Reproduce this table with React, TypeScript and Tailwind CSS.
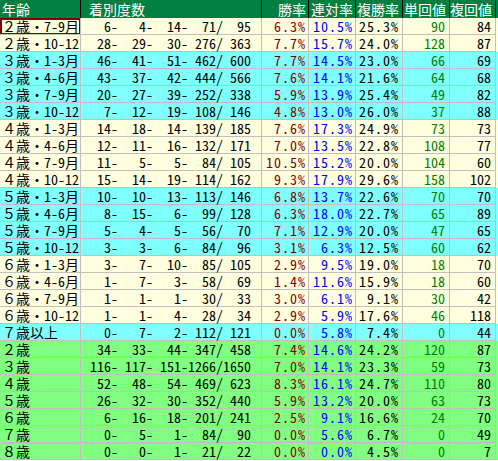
type Row = {
  label: string;
  rec: [number, number, number, number, number];
  win: string;
  ren: string;
  fuku: string;
  tan: number;
  fukuK: number;
  bg: string;
};

const CREAM = 'bg-[#ffffe0]';
const CYAN = 'bg-[#80ffff]';
const GREEN = 'bg-[#80ff80]';

const rows: Row[] = [
  { label: '２歳・7-9月', rec: [6, 4, 14, 71, 95], win: '6.3%', ren: '10.5%', fuku: '25.3%', tan: 90, fukuK: 84, bg: CREAM },
  { label: '２歳・10-12', rec: [28, 29, 30, 276, 363], win: '7.7%', ren: '15.7%', fuku: '24.0%', tan: 128, fukuK: 87, bg: CREAM },
  { label: '３歳・1-3月', rec: [46, 41, 51, 462, 600], win: '7.7%', ren: '14.5%', fuku: '23.0%', tan: 66, fukuK: 69, bg: CYAN },
  { label: '３歳・4-6月', rec: [43, 37, 42, 444, 566], win: '7.6%', ren: '14.1%', fuku: '21.6%', tan: 64, fukuK: 68, bg: CYAN },
  { label: '３歳・7-9月', rec: [20, 27, 39, 252, 338], win: '5.9%', ren: '13.9%', fuku: '25.4%', tan: 49, fukuK: 82, bg: CYAN },
  { label: '３歳・10-12', rec: [7, 12, 19, 108, 146], win: '4.8%', ren: '13.0%', fuku: '26.0%', tan: 37, fukuK: 88, bg: CYAN },
  { label: '４歳・1-3月', rec: [14, 18, 14, 139, 185], win: '7.6%', ren: '17.3%', fuku: '24.9%', tan: 73, fukuK: 73, bg: CREAM },
  { label: '４歳・4-6月', rec: [12, 11, 16, 132, 171], win: '7.0%', ren: '13.5%', fuku: '22.8%', tan: 108, fukuK: 77, bg: CREAM },
  { label: '４歳・7-9月', rec: [11, 5, 5, 84, 105], win: '10.5%', ren: '15.2%', fuku: '20.0%', tan: 104, fukuK: 60, bg: CREAM },
  { label: '４歳・10-12', rec: [15, 14, 19, 114, 162], win: '9.3%', ren: '17.9%', fuku: '29.6%', tan: 158, fukuK: 102, bg: CREAM },
  { label: '５歳・1-3月', rec: [10, 10, 13, 113, 146], win: '6.8%', ren: '13.7%', fuku: '22.6%', tan: 70, fukuK: 70, bg: CYAN },
  { label: '５歳・4-6月', rec: [8, 15, 6, 99, 128], win: '6.3%', ren: '18.0%', fuku: '22.7%', tan: 65, fukuK: 89, bg: CYAN },
  { label: '５歳・7-9月', rec: [5, 4, 5, 56, 70], win: '7.1%', ren: '12.9%', fuku: '20.0%', tan: 47, fukuK: 65, bg: CYAN },
  { label: '５歳・10-12', rec: [3, 3, 6, 84, 96], win: '3.1%', ren: '6.3%', fuku: '12.5%', tan: 60, fukuK: 62, bg: CYAN },
  { label: '６歳・1-3月', rec: [3, 7, 10, 85, 105], win: '2.9%', ren: '9.5%', fuku: '19.0%', tan: 18, fukuK: 70, bg: CREAM },
  { label: '６歳・4-6月', rec: [1, 7, 3, 58, 69], win: '1.4%', ren: '11.6%', fuku: '15.9%', tan: 18, fukuK: 60, bg: CREAM },
  { label: '６歳・7-9月', rec: [1, 1, 1, 30, 33], win: '3.0%', ren: '6.1%', fuku: '9.1%', tan: 30, fukuK: 42, bg: CREAM },
  { label: '６歳・10-12', rec: [1, 1, 4, 28, 34], win: '2.9%', ren: '5.9%', fuku: '17.6%', tan: 46, fukuK: 118, bg: CREAM },
  { label: '７歳以上', rec: [0, 7, 2, 112, 121], win: '0.0%', ren: '5.8%', fuku: '7.4%', tan: 0, fukuK: 44, bg: CYAN },
  { label: '２歳', rec: [34, 33, 44, 347, 458], win: '7.4%', ren: '14.6%', fuku: '24.2%', tan: 120, fukuK: 87, bg: GREEN },
  { label: '３歳', rec: [116, 117, 151, 1266, 1650], win: '7.0%', ren: '14.1%', fuku: '23.3%', tan: 59, fukuK: 73, bg: GREEN },
  { label: '４歳', rec: [52, 48, 54, 469, 623], win: '8.3%', ren: '16.1%', fuku: '24.7%', tan: 110, fukuK: 80, bg: GREEN },
  { label: '５歳', rec: [26, 32, 30, 352, 440], win: '5.9%', ren: '13.2%', fuku: '20.0%', tan: 63, fukuK: 73, bg: GREEN },
  { label: '６歳', rec: [6, 16, 18, 201, 241], win: '2.5%', ren: '9.1%', fuku: '16.6%', tan: 24, fukuK: 70, bg: GREEN },
  { label: '７歳', rec: [0, 5, 1, 84, 90], win: '0.0%', ren: '5.6%', fuku: '6.7%', tan: 0, fukuK: 49, bg: GREEN },
  { label: '８歳', rec: [0, 0, 1, 21, 22], win: '0.0%', ren: '0.0%', fuku: '4.5%', tan: 0, fukuK: 7, bg: GREEN },
];

const cell = 'h-[17px] border-r border-b border-[#c0c0c0] leading-[16px] whitespace-nowrap';

const Record = ({ rec }: { rec: Row['rec'] }) => (
  <div className={`${cell} w-[181px] flex justify-end pr-[10px] text-black`}>
    <span className="w-[35px] text-right">{rec[0]}-</span>
    <span className="w-[35px] text-right">{rec[1]}-</span>
    <span className="w-[35px] text-right">{rec[2]}-</span>
    <span className="w-[35px] text-right">{rec[3]}/</span>
    <span className="w-[28px] text-right">{rec[4]}</span>
  </div>
);

export default function App() {
  return (
    <div className="w-[498px] h-[461px] bg-white text-[14px] font-['Noto_Sans_Mono_CJK_JP','Noto_Sans_CJK_JP',sans-serif]">
      {/* header */}
      <div className="flex h-[18px] bg-[#008040] text-white leading-[18px]">
        <div className="w-[81px] border-r border-black pl-[2px]">年齢</div>
        <div className="w-[181px] border-r border-black pl-[8px]">着別度数</div>
        <div className="w-[47px] border-r border-black text-right pr-[2px]">勝率</div>
        <div className="w-[47px] border-r border-black text-right pr-[2px]">連対率</div>
        <div className="w-[47px] border-r border-black text-right pr-[3px]">複勝率</div>
        <div className="w-[47px] border-r border-black text-right pr-[3px]">単回値</div>
        <div className="w-[46px] border-r border-black text-right pr-[3px]">複回値</div>
      </div>

      {rows.map((r, i) => (
        <div key={r.label} className={`flex ${r.bg}`}>
          <div
            className={`${cell} w-[81px] pl-[2px] text-black ${
              i === 0 ? 'border-[#800000] shadow-[inset_2px_2px_0_#800000,inset_-1px_-1px_0_#800000]' : ''
            }`}
          >
            {r.label}
          </div>
          <Record rec={r.rec} />
          <div className={`${cell} w-[47px] text-right pr-[2px] tracking-[1px] text-[#800000]`}>{r.win}</div>
          <div className={`${cell} w-[47px] text-right pr-[2px] tracking-[1px] text-[#0000ff]`}>{r.ren}</div>
          <div className={`${cell} w-[47px] text-right pr-[3px] tracking-[1px] text-black`}>{r.fuku}</div>
          <div className={`${cell} w-[47px] text-right pr-[4px] text-[#008000]`}>{r.tan}</div>
          <div className={`${cell} w-[46px] text-right pr-[4px] text-black`}>{r.fukuK}</div>
        </div>
      ))}
    </div>
  );
}
